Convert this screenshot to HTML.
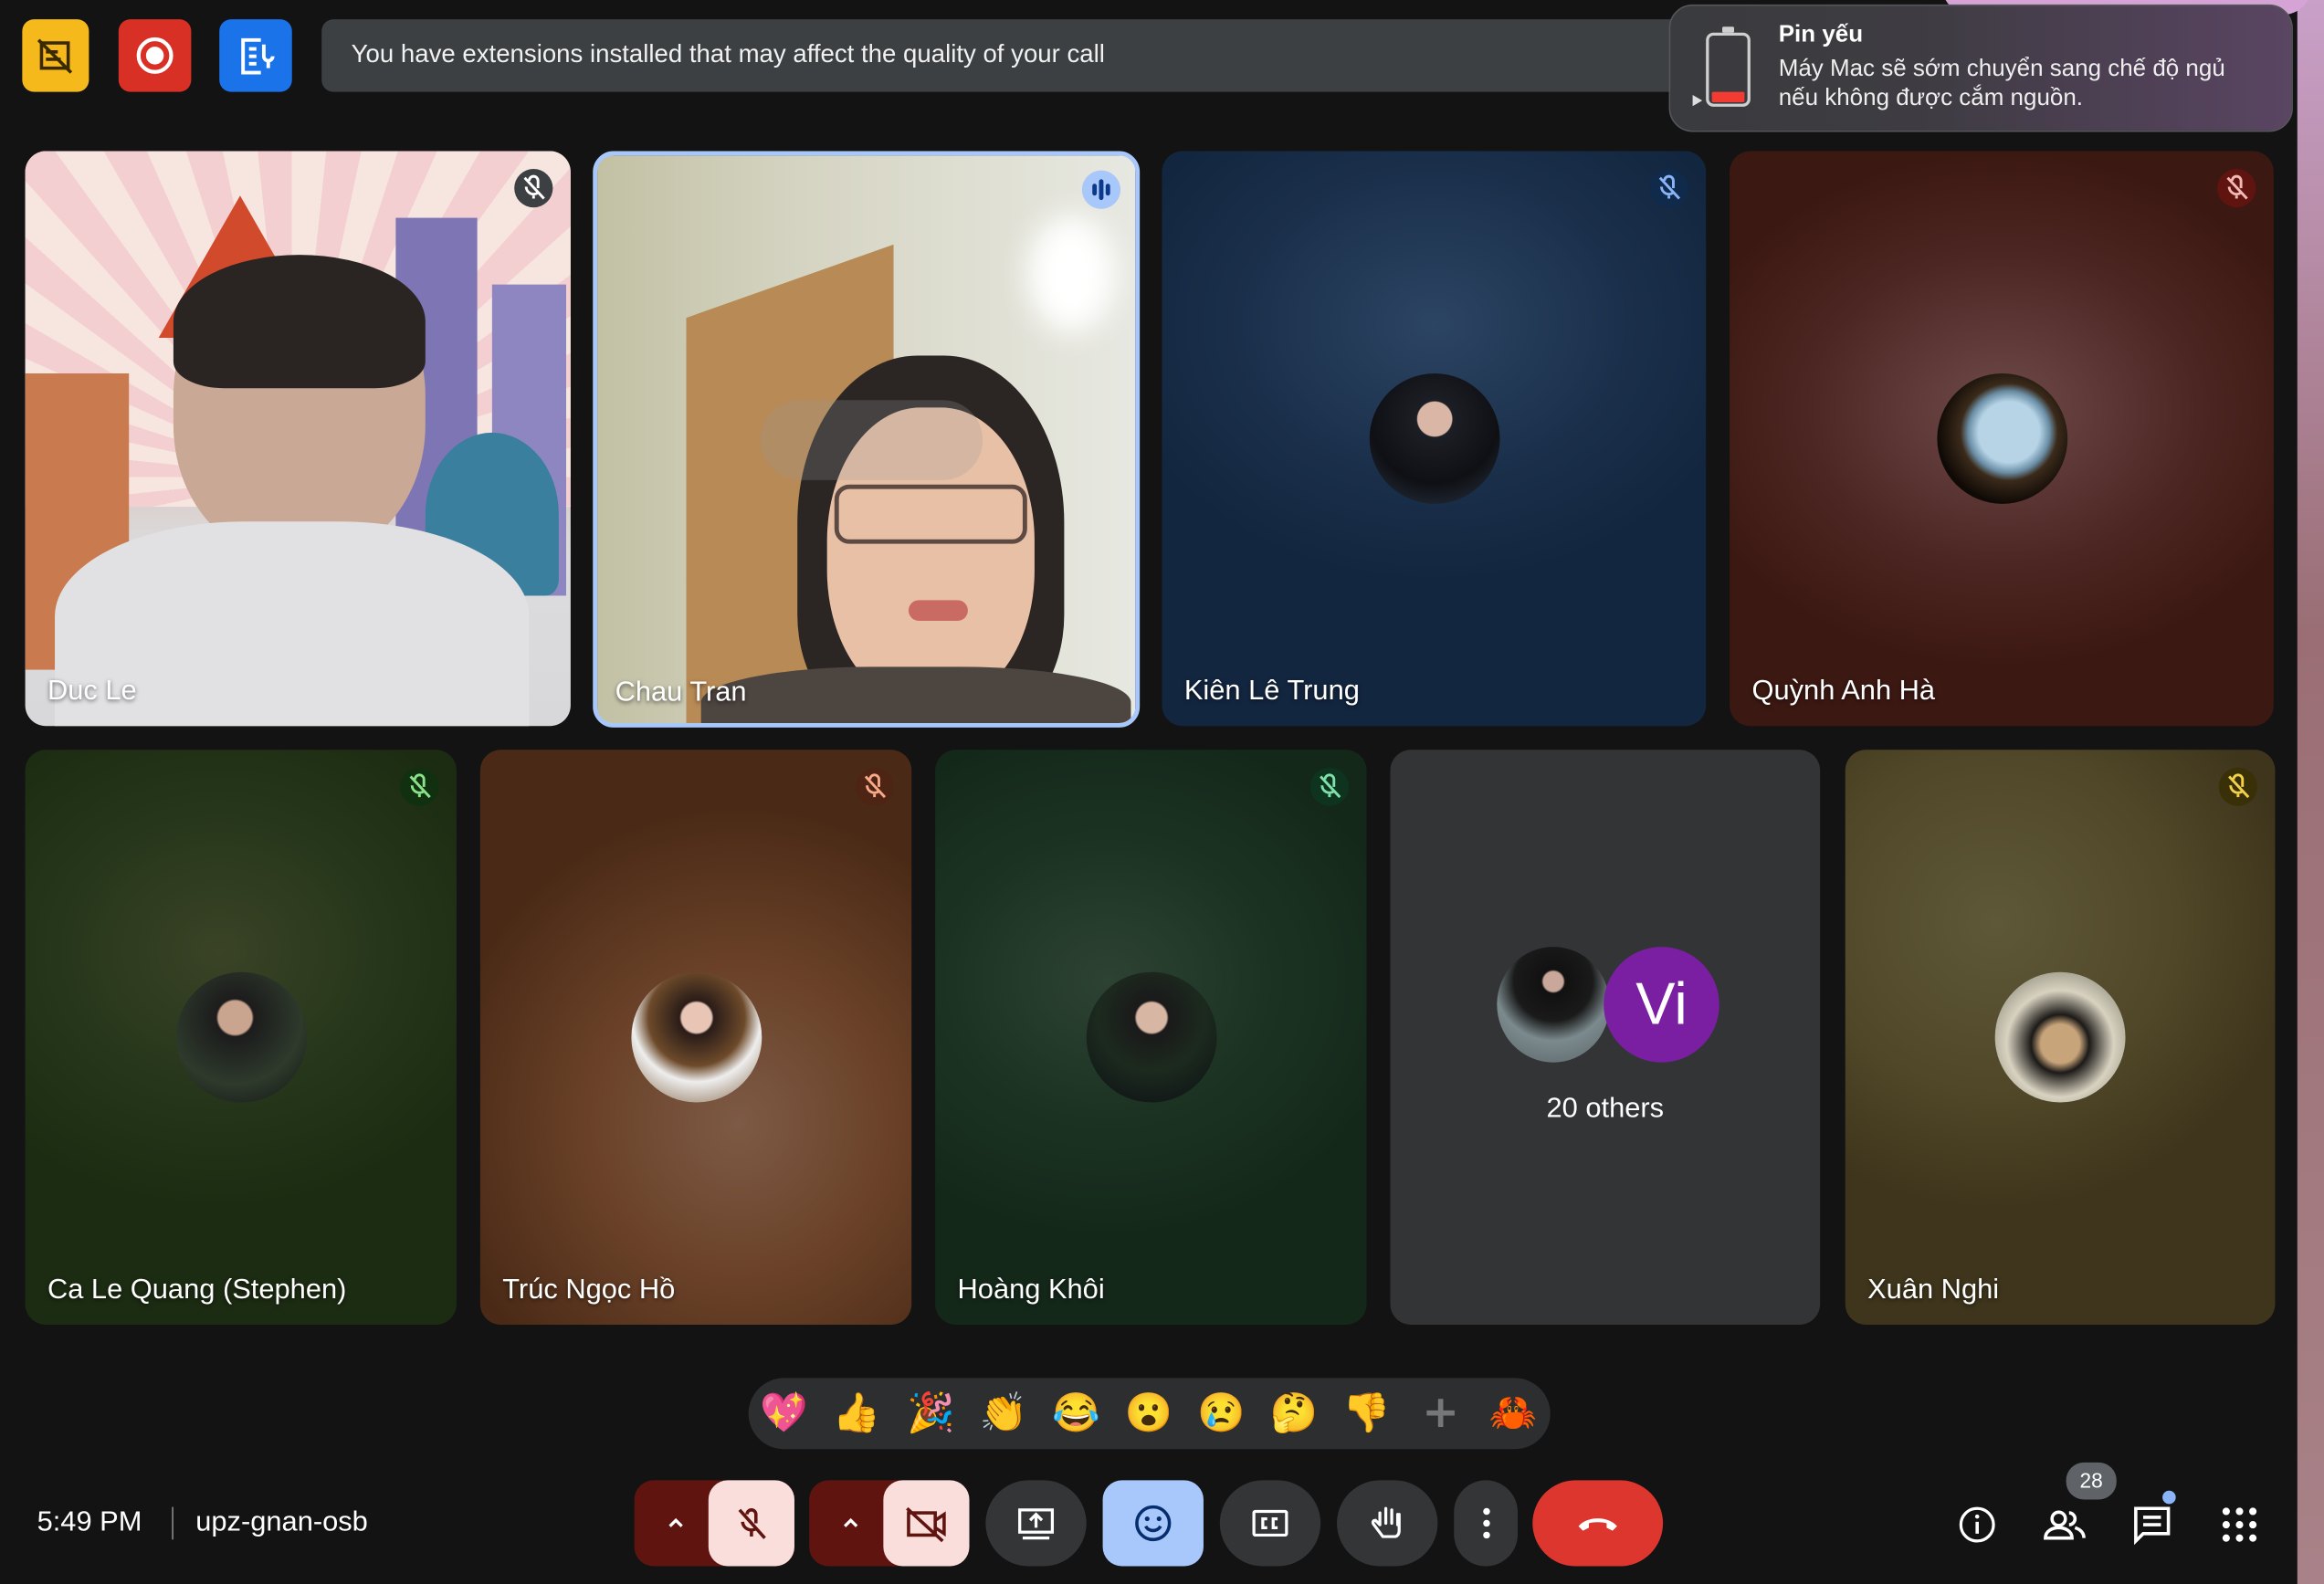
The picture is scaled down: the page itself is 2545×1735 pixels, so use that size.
<!DOCTYPE html>
<html><head><meta charset="utf-8">
<style>
html,body{margin:0;padding:0;background:#131314;overflow:hidden;width:2545px;height:1735px}
#s{position:absolute;left:0;top:0;width:1568px;height:1069px;transform:scale(1.62309,1.62301);transform-origin:0 0;background:#131314;font-family:"Liberation Sans","Noto Sans CJK SC",sans-serif;color:#fff;overflow:hidden}
.a{position:absolute}
.tile{position:absolute;border-radius:14px;overflow:hidden}
.name{position:absolute;left:15px;bottom:12px;font-size:19px;color:#fff;text-shadow:0 1px 3px rgba(0,0,0,.6)}
.mic{position:absolute;top:12px;right:12px;width:26px;height:26px;border-radius:50%}
.av{position:absolute;width:88px;height:88px;border-radius:50%;left:50%;top:50%;margin:-44px 0 0 -44px}
.btn{position:absolute;top:999px;height:58px;border-radius:29px;background:#333537;display:flex;align-items:center;justify-content:center}
.emo{position:absolute;top:939px;font-size:26px;width:34px;text-align:center;line-height:30px;font-family:"Noto Color Emoji","DejaVu Sans",sans-serif}
</style></head><body><div id="s">
<div class="a" style="left:1550px;top:0;width:18px;height:1069px;background:linear-gradient(#c9a0c8,#9a6e74 40%,#a88288)"></div>
<div class="a" style="left:1310px;top:-30px;width:250px;height:40px;border-radius:20px;background:#d6a3d6"></div>

<div class="a" style="left:15px;top:13px;width:45px;height:49px;border-radius:8px;background:#f6b91c"><svg width="45" height="49" viewBox="0 0 45 49"><g fill="none" stroke="#3a2a00" stroke-width="2.2"><rect x="13" y="16" width="18" height="17"/><path d="M11 14 L33 36"/><path d="M16 22h8M16 27h10"/></g></svg></div>
<div class="a" style="left:80px;top:13px;width:49px;height:49px;border-radius:8px;background:#d93025"><svg width="49" height="49"><circle cx="24.5" cy="24.5" r="11" fill="none" stroke="#fff" stroke-width="2.6"/><circle cx="24.5" cy="24.5" r="6" fill="#fff"/></svg></div>
<div class="a" style="left:148px;top:13px;width:49px;height:49px;border-radius:8px;background:#1a73e8"><svg width="49" height="49"><g fill="none" stroke="#fff" stroke-width="2.4"><path d="M28 14H16v22h12"/><path d="M20 20h5M20 25h5M20 30h5"/><path d="M30 17v8a3 3 0 0 0 6 0M33 28v5"/></g></svg></div>
<div class="a" style="left:217px;top:13px;width:930px;height:49px;border-radius:8px;background:#3c4043"><span style="position:absolute;left:20px;top:14px;font-size:17px;color:#f1f1f1">You have extensions installed that may affect the quality of your call</span></div>

<div class="a" style="left:1126px;top:3px;width:421px;height:86px;border-radius:16px;background:linear-gradient(90deg,#3a3b3e 0%,#3e3c42 40%,#4e4055 75%,#5a4562 100%);border:1px solid #55565a;box-sizing:border-box">
 <div class="a" style="left:24px;top:18px;width:30px;height:50px;border:2px solid #cfcfcf;border-radius:5px;box-sizing:border-box"></div>
 <div class="a" style="left:35px;top:14px;width:8px;height:4px;background:#cfcfcf;border-radius:1px"></div>
 <div class="a" style="left:28px;top:58px;width:22px;height:7px;background:#f23b33;border-radius:1px"></div>
 <div class="a" style="left:14px;top:59px;font-size:8px;color:#ddd">▶</div>
 <div class="a" style="left:73px;top:11px;font-size:16px;font-weight:bold;color:#fff">Pin yếu</div>
 <div class="a" style="left:73px;top:33px;font-size:16px;line-height:20px;color:#eee">Máy Mac sẽ sớm chuyển sang chế độ ngủ<br>nếu không được cắm nguồn.</div>
</div>

<div class="tile" style="left:17px;top:102px;width:368px;height:388px;background:linear-gradient(180deg,#f4e2dc 0%,#f3d9cf 30%,#d9c9c4 55%,#dcdcde 70%,#d8d8da 100%)">
 <div class="a" style="left:0;top:0;width:368px;height:240px;background:repeating-conic-gradient(from 0deg at 180px 220px,#f7e6df 0 6deg,#f4cfd2 6deg 12deg)"></div>
 <div class="a" style="left:90px;top:30px;width:110px;height:120px;background:#d24a2c;clip-path:polygon(50% 0,100% 80%,0 80%)"></div>
 <div class="a" style="left:250px;top:45px;width:55px;height:230px;background:#7e76b4"></div>
 <div class="a" style="left:315px;top:90px;width:50px;height:210px;background:#8d86c0"></div>
 <div class="a" style="left:0;top:150px;width:70px;height:200px;background:#c97a4e"></div>
 <div class="a" style="left:270px;top:190px;width:90px;height:110px;border-radius:50% 50% 10% 10%;background:#3a7f9e"></div>
 <div class="a" style="left:20px;top:240px;width:330px;height:60px;background:#c64a2a;clip-path:polygon(10% 100%,50% 0,90% 100%)"></div>
 <div class="a" style="left:100px;top:75px;width:170px;height:200px;border-radius:45%;background:#c9a896"></div>
 <div class="a" style="left:100px;top:70px;width:170px;height:90px;border-radius:50% 50% 20% 20%;background:#2a2522"></div>
 <div class="a" style="left:20px;top:250px;width:320px;height:160px;border-radius:40% 40% 0 0;background:#e1e1e3"></div>
 <div class="mic" style="background:#3c4043"><svg width="26" height="26"><g stroke="#fff" stroke-width="1.8" fill="none"><path d="M10 8a3 3 0 0 1 6 0v5M8 12a5 5 0 0 0 8 4M13 18v2M7 6l13 14"/></g></svg></div>
 <div class="name">Duc Le</div>
</div>
<div class="tile" style="left:400px;top:102px;width:369px;height:389px;border:3px solid #a8c7fa;box-sizing:border-box;background:linear-gradient(90deg,#c2c1a4 0%,#d6d5c4 40%,#e7e8e1 100%)">
 <div class="a" style="left:60px;top:60px;width:140px;height:330px;background:#b88a55;clip-path:polygon(0 15%,100% 0,100% 100%,0 100%)"></div>
 <div class="a" style="left:290px;top:40px;width:60px;height:80px;border-radius:50%;background:#fff;filter:blur(10px)"></div>
 <div class="a" style="left:135px;top:135px;width:180px;height:250px;border-radius:45% 45% 30% 30%;background:#2b2624"></div>
 <div class="a" style="left:155px;top:170px;width:140px;height:200px;border-radius:45%;background:#e8c0a6"></div>
 <div class="a" style="left:160px;top:222px;width:130px;height:40px;border:3px solid #5d4a42;border-radius:10px;box-sizing:border-box"></div>
 <div class="a" style="left:210px;top:300px;width:40px;height:14px;border-radius:7px;background:#c96a63"></div>
 <div class="a" style="left:70px;top:345px;width:290px;height:60px;border-radius:40% 40% 0 0;background:#4d4540"></div>
 <div class="a" style="left:110px;top:165px;width:150px;height:54px;border-radius:27px;background:rgba(150,150,150,.25)"></div>
 <div class="mic" style="background:#a8c7fa;top:10px;right:10px"><svg width="26" height="26"><g fill="#0b3a8a"><rect x="7" y="9" width="3" height="8" rx="1.5"/><rect x="11.5" y="6" width="3" height="14" rx="1.5"/><rect x="16" y="9" width="3" height="8" rx="1.5"/></g></svg></div>
 <div class="name" style="left:12px;bottom:9px">Chau Tran</div>
</div>
<div class="tile" style="left:784px;top:102px;width:367px;height:388px;background:radial-gradient(ellipse 60% 45% at 50% 30%,#2c4563 0%,#1a2f4a 60%,#132640 100%)">
 <div class="av" style="background:radial-gradient(circle at 50% 35%,#d9b6a6 0 16%,#1c1e25 17%,#0f1014 60%,#2a3546 100%)"></div>
 <div class="mic" style="background:#0f2a4a"><svg width="26" height="26"><g stroke="#8ab4f8" stroke-width="1.8" fill="none"><path d="M10 8a3 3 0 0 1 6 0v5M8 12a5 5 0 0 0 8 4M13 18v2M7 6l13 14"/></g></svg></div>
 <div class="name">Kiên Lê Trung</div>
</div>
<div class="tile" style="left:1167px;top:102px;width:367px;height:388px;background:radial-gradient(ellipse 60% 45% at 50% 45%,#6e4a4a 0%,#4c2622 60%,#3c1812 100%)">
 <div class="av" style="background:radial-gradient(circle at 55% 45%,#b7d4e6 0 30%,#6b8fa7 40%,#3a2a1a 48%,#100a06 70%)"></div>
 <div class="mic" style="background:#601410"><svg width="26" height="26"><g stroke="#f2b8b5" stroke-width="1.8" fill="none"><path d="M10 8a3 3 0 0 1 6 0v5M8 12a5 5 0 0 0 8 4M13 18v2M7 6l13 14"/></g></svg></div>
 <div class="name">Quỳnh Anh Hà</div>
</div>

<div class="tile" style="left:17px;top:506px;width:291px;height:388px;background:radial-gradient(ellipse 70% 45% at 45% 35%,#3a4326 0%,#26361a 55%,#1c2c12 100%)">
 <div class="av" style="background:radial-gradient(circle at 45% 35%,#c9a48e 0 15%,#1c1c1c 17%,#2e3a2c 60%,#111 100%)"></div>
 <div class="mic" style="background:#10300f"><svg width="26" height="26"><g stroke="#8be08a" stroke-width="1.8" fill="none"><path d="M10 8a3 3 0 0 1 6 0v5M8 12a5 5 0 0 0 8 4M13 18v2M7 6l13 14"/></g></svg></div>
 <div class="name">Ca Le Quang (Stephen)</div>
</div>
<div class="tile" style="left:324px;top:506px;width:291px;height:388px;background:radial-gradient(ellipse 70% 55% at 60% 65%,#7d5a45 0%,#6a4128 50%,#4a2a16 100%)">
 <div class="av" style="background:radial-gradient(circle at 50% 35%,#e8c5b4 0 14%,#2a1c18 16%,#6d4a2a 45%,#eee 60%,#7a5a38 100%)"></div>
 <div class="mic" style="background:#4e2414"><svg width="26" height="26"><g stroke="#f7a98a" stroke-width="1.8" fill="none"><path d="M10 8a3 3 0 0 1 6 0v5M8 12a5 5 0 0 0 8 4M13 18v2M7 6l13 14"/></g></svg></div>
 <div class="name">Trúc Ngọc Hồ</div>
</div>
<div class="tile" style="left:631px;top:506px;width:291px;height:388px;background:radial-gradient(ellipse 70% 45% at 40% 40%,#2d4232 0%,#1b3222 55%,#14281a 100%)">
 <div class="av" style="background:radial-gradient(circle at 50% 35%,#d8b6a4 0 14%,#1a1a1a 16%,#1c2a1e 50%,#0c0e14 100%)"></div>
 <div class="mic" style="background:#0e3420"><svg width="26" height="26"><g stroke="#7fe0a8" stroke-width="1.8" fill="none"><path d="M10 8a3 3 0 0 1 6 0v5M8 12a5 5 0 0 0 8 4M13 18v2M7 6l13 14"/></g></svg></div>
 <div class="name">Hoàng Khôi</div>
</div>
<div class="tile" style="left:938px;top:506px;width:290px;height:388px;background:#333436">
 <div class="a" style="left:72px;top:133px;width:76px;height:78px;border-radius:50%;background:radial-gradient(circle at 50% 30%,#c9a79a 0 10%,#111 12%,#1a1a1a 40%,#7b8a8e 60%,#5a6466 100%)"></div>
 <div class="a" style="left:144px;top:133px;width:78px;height:78px;border-radius:50%;background:#7b1fa2;font-size:40px;line-height:78px;text-align:center;color:#fff">Vi</div>
 <div class="a" style="left:0;top:232px;width:290px;text-align:center;font-size:19px">20 others</div>
</div>
<div class="tile" style="left:1245px;top:506px;width:290px;height:388px;background:radial-gradient(ellipse 70% 50% at 35% 30%,#5e5838 0%,#504728 60%,#3e351c 100%)">
 <div class="av" style="background:radial-gradient(circle at 50% 55%,#c8a47a 0 20%,#1c1a18 30%,#d8d2c0 55%,#6a6a5a 100%)"></div>
 <div class="mic" style="background:#3a3008"><svg width="26" height="26"><g stroke="#f1d14a" stroke-width="1.8" fill="none"><path d="M10 8a3 3 0 0 1 6 0v5M8 12a5 5 0 0 0 8 4M13 18v2M7 6l13 14"/></g></svg></div>
 <div class="name">Xuân Nghi</div>
</div>

<div class="a" style="left:505px;top:930px;width:541px;height:48px;border-radius:24px;background:#2d2e30"></div>
<div class="emo" style="left:512px">💖</div><div class="emo" style="left:561px">👍</div><div class="emo" style="left:611px">🎉</div><div class="emo" style="left:660px">👏</div><div class="emo" style="left:709px">😂</div><div class="emo" style="left:758px">😮</div><div class="emo" style="left:807px">😢</div><div class="emo" style="left:856px">🤔</div><div class="emo" style="left:905px">👎</div>
<div class="emo" style="left:955px;color:#777;font-size:30px;font-weight:bold">+</div><div class="emo" style="left:1004px">🦀</div>

<div class="a" style="left:25px;top:1017px;font-size:19px;color:#fff">5:49 PM</div>
<div class="a" style="left:116px;top:1017px;width:1px;height:22px;background:#888"></div>
<div class="a" style="left:132px;top:1017px;font-size:19px;color:#fff">upz-gnan-osb</div>

<div class="btn" style="left:428px;width:108px;background:#601410;border-radius:13px;justify-content:flex-start"><svg style="margin-left:21px" width="14" height="14"><path d="M3 9l4-4 4 4" stroke="#fff" stroke-width="2" fill="none"/></svg></div>
<div class="btn" style="left:478px;width:58px;background:#f9dedc;border-radius:13px"><svg width="30" height="30"><g stroke="#601410" stroke-width="2.2" fill="none"><path d="M12 9a3 3 0 0 1 6 0v6M9 14a6 6 0 0 0 10 4M15 20v4M7 6l17 19"/></g></svg></div>
<div class="btn" style="left:546px;width:108px;background:#601410;border-radius:13px;justify-content:flex-start"><svg style="margin-left:21px" width="14" height="14"><path d="M3 9l4-4 4 4" stroke="#fff" stroke-width="2" fill="none"/></svg></div>
<div class="btn" style="left:596px;width:58px;background:#f9dedc;border-radius:13px"><svg width="32" height="30"><g stroke="#601410" stroke-width="2.2" fill="none"><rect x="4" y="8" width="18" height="15"/><path d="M22 13l6-4v13l-6-4M3 5l24 22"/></g></svg></div>
<div class="btn" style="left:665px;width:68px"><svg width="30" height="30"><g stroke="#fff" stroke-width="2" fill="none"><rect x="4" y="6" width="22" height="15"/><path d="M15 18v-8M11 13l4-4 4 4M6 25h18"/></g></svg></div>
<div class="btn" style="left:744px;width:68px;background:#a8c7fa;border-radius:13px"><svg width="30" height="30"><g stroke="#062e6f" stroke-width="2.2" fill="none"><circle cx="15" cy="15" r="11"/><path d="M10 17a5.5 5 0 0 0 10 0"/></g><circle cx="11" cy="12" r="1.6" fill="#062e6f"/><circle cx="19" cy="12" r="1.6" fill="#062e6f"/></svg></div>
<div class="btn" style="left:823px;width:68px"><svg width="30" height="30"><g stroke="#fff" stroke-width="2" fill="none"><rect x="4" y="7" width="22" height="16" rx="1"/><path d="M13 12h-3v6h3M20 12h-3v6h3"/></g></svg></div>
<div class="btn" style="left:902px;width:68px"><svg width="30" height="30"><g stroke="#fff" stroke-width="2" fill="none" stroke-linecap="round"><path d="M10 16V8M14 15V5M18 15V6M22 16V9M10 16l-3-3c-2 0-2 2-1 3l6 8h8c2 0 3-2 3-4v-11"/></g></svg></div>
<div class="btn" style="left:981px;width:43px"><svg width="10" height="30"><circle cx="5" cy="7" r="2.3" fill="#fff"/><circle cx="5" cy="15" r="2.3" fill="#fff"/><circle cx="5" cy="23" r="2.3" fill="#fff"/></svg></div>
<div class="btn" style="left:1034px;width:88px;background:#dc362e"><svg width="34" height="20"><path d="M4 12c6-7 20-7 26 0l-3 3-4-2v-3c-4-1-8-1-12 0v3l-4 2z" fill="#fff"/></svg></div>

<svg class="a" style="left:1319px;top:1014px" width="30" height="30"><circle cx="15" cy="15" r="11" stroke="#fff" stroke-width="2" fill="none"/><path d="M15 13v8" stroke="#fff" stroke-width="2.2"/><circle cx="15" cy="9.5" r="1.4" fill="#fff"/></svg>
<div class="a" style="left:1394px;top:987px;width:34px;height:25px;border-radius:12px;background:#5f6368;font-size:14px;line-height:25px;text-align:center">28</div>
<svg class="a" style="left:1377px;top:1014px" width="32" height="30"><g stroke="#fff" stroke-width="2.2" fill="none"><circle cx="12" cy="11" r="4.5"/><path d="M3 24c0-5 5-7 9-7s9 2 9 7z"/><path d="M19 7a4 4 0 0 1 0 8M23 17c3 1 6 3 6 7"/></g></svg>
<svg class="a" style="left:1437px;top:1014px" width="30" height="30"><g stroke="#fff" stroke-width="2.2" fill="none"><path d="M4 4h22v17H9l-5 5z"/><path d="M9 10h12M9 15h12"/></g></svg>
<div class="a" style="left:1459px;top:1006px;width:9px;height:9px;border-radius:50%;background:#8ab4f8"></div>
<svg class="a" style="left:1498px;top:1016px" width="26" height="26"><g fill="#fff"><circle cx="4" cy="4" r="2.5"/><circle cx="13" cy="4" r="2.5"/><circle cx="22" cy="4" r="2.5"/><circle cx="4" cy="13" r="2.5"/><circle cx="13" cy="13" r="2.5"/><circle cx="22" cy="13" r="2.5"/><circle cx="4" cy="22" r="2.5"/><circle cx="13" cy="22" r="2.5"/><circle cx="22" cy="22" r="2.5"/></g></svg>
</div></body></html>
